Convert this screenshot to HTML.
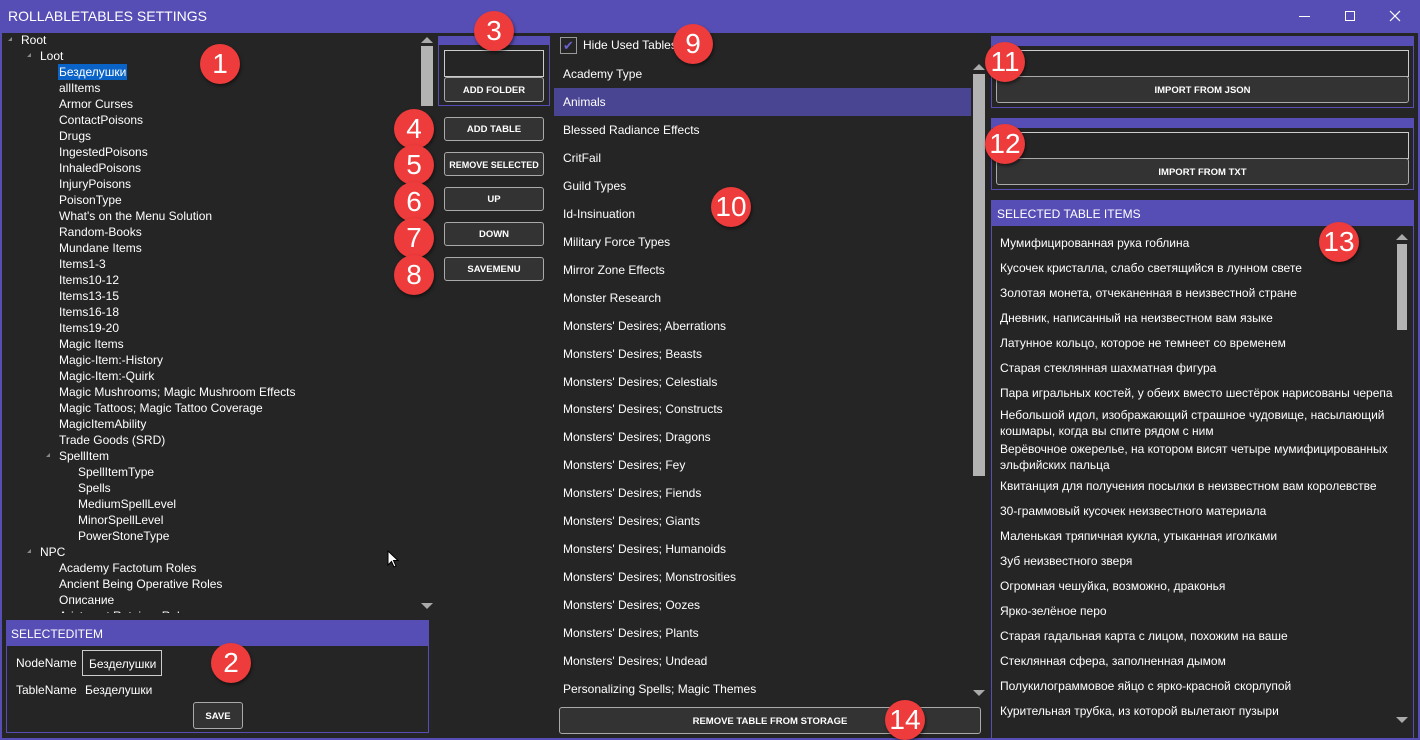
<!DOCTYPE html>
<html><head><meta charset="utf-8"><style>
*{box-sizing:border-box;margin:0;padding:0}
body{width:1420px;height:740px;background:#252525;font-family:"Liberation Sans","Noto Sans CJK SC",sans-serif;color:#fff;font-size:12px;position:relative;overflow:hidden}
.a{position:absolute}
.title{left:0;top:0;width:1420px;height:33px;background:#574eb5;}
.title span{position:absolute;left:8px;top:8px;font-size:14px;color:#fff}
.tree{left:6px;top:33px;width:414px;height:580px;overflow:hidden}
.tree div{position:absolute;height:16px;line-height:16px;white-space:nowrap;font-size:12px}
.tri{position:absolute;width:0;height:0;border-left:4px solid transparent;border-bottom:4px solid #888}
.btn{position:absolute;border:1px solid #aaa;border-radius:3px;background:#333;color:#fff;font-weight:bold;font-size:9.5px;text-align:center;padding-top:2px}
.tb{position:absolute;border:1px solid #ccc;background:#252525}
.grp{position:absolute;border:1px solid #574eb5}
.hdr{position:absolute;background:#574eb5}
.li{position:absolute;left:563px;font-size:12px;height:28px;line-height:28px;white-space:nowrap}
.ri{position:absolute;left:1000px;font-size:12px;line-height:16px;width:400px}
.c{position:absolute;width:40px;height:40px;border-radius:50%;background:#ee3b3b;color:#fff;font-size:28px;text-align:center;line-height:40px;font-family:"Liberation Sans",sans-serif;box-shadow:1px 2px 3px rgba(0,0,0,.5)}
.sb{position:absolute;background:#b3b3b3}
.up{position:absolute;width:0;height:0;border-left:6px solid transparent;border-right:6px solid transparent;border-bottom:6px solid #aaa}
.dn{position:absolute;width:0;height:0;border-left:6px solid transparent;border-right:6px solid transparent;border-top:6px solid #aaa}
</style></head><body>
<div class="a title"><span>ROLLABLETABLES SETTINGS</span>
<div class="a" style="left:1299px;top:16px;width:11px;height:1px;background:#fff"></div>
<div class="a" style="left:1345px;top:11px;width:10px;height:10px;border:1px solid #fff"></div>
<svg class="a" style="left:1389px;top:10px" width="12" height="12"><path d="M1 1L11 11M11 1L1 11" stroke="#fff" stroke-width="1.2"/></svg>
</div>
<div class="a" style="left:0;top:33px;width:2px;height:707px;background:#574eb5"></div>
<div class="a" style="left:1418px;top:33px;width:2px;height:707px;background:#574eb5"></div>
<div class="a" style="left:0;top:738px;width:1420px;height:2px;background:#574eb5"></div>

<div class="a tree">
<span class="tri" style="left:2px;top:4px"></span>
<span class="tri" style="left:21px;top:20px"></span>
<span class="tri" style="left:40px;top:420px"></span>
<div style="left:15px;top:-1px">Root</div>
<div style="left:34px;top:15px">Loot</div>
<div style="left:52px;top:31px;background:#0a64c8;padding:0 1px">Безделушки</div>
<div style="left:53px;top:47px">allItems</div>
<div style="left:53px;top:63px">Armor Curses</div>
<div style="left:53px;top:79px">ContactPoisons</div>
<div style="left:53px;top:95px">Drugs</div>
<div style="left:53px;top:111px">IngestedPoisons</div>
<div style="left:53px;top:127px">InhaledPoisons</div>
<div style="left:53px;top:143px">InjuryPoisons</div>
<div style="left:53px;top:159px">PoisonType</div>
<div style="left:53px;top:175px">What's on the Menu Solution</div>
<div style="left:53px;top:191px">Random-Books</div>
<div style="left:53px;top:207px">Mundane Items</div>
<div style="left:53px;top:223px">Items1-3</div>
<div style="left:53px;top:239px">Items10-12</div>
<div style="left:53px;top:255px">Items13-15</div>
<div style="left:53px;top:271px">Items16-18</div>
<div style="left:53px;top:287px">Items19-20</div>
<div style="left:53px;top:303px">Magic Items</div>
<div style="left:53px;top:319px">Magic-Item:-History</div>
<div style="left:53px;top:335px">Magic-Item:-Quirk</div>
<div style="left:53px;top:351px">Magic Mushrooms; Magic Mushroom Effects</div>
<div style="left:53px;top:367px">Magic Tattoos; Magic Tattoo Coverage</div>
<div style="left:53px;top:383px">MagicItemAbility</div>
<div style="left:53px;top:399px">Trade Goods (SRD)</div>
<div style="left:53px;top:415px">SpellItem</div>
<div style="left:72px;top:431px">SpellItemType</div>
<div style="left:72px;top:447px">Spells</div>
<div style="left:72px;top:463px">MediumSpellLevel</div>
<div style="left:72px;top:479px">MinorSpellLevel</div>
<div style="left:72px;top:495px">PowerStoneType</div>
<div style="left:34px;top:511px">NPC</div>
<span class="tri" style="left:21px;top:516px"></span>
<div style="left:53px;top:527px">Academy Factotum Roles</div>
<div style="left:53px;top:543px">Ancient Being Operative Roles</div>
<div style="left:53px;top:559px">Описание</div>
<div style="left:53px;top:575px">Aristocrat Retainer Roles</div>
</div>
<div class="up" style="left:421px;top:37px"></div>
<div class="sb" style="left:421px;top:46px;width:12px;height:60px"></div>
<div class="dn" style="left:421px;top:603px"></div>
<svg class="a" style="left:387px;top:550px" width="12" height="19"><path d="M1 1L1 15L4.5 11.5L7 17L9 16L6.5 10.5L11 10.5Z" fill="#fff" stroke="#000" stroke-width="1"/></svg>

<div class="grp" style="left:6px;top:620px;width:423px;height:113px"></div>
<div class="hdr" style="left:6px;top:620px;width:423px;height:26px"><span style="position:absolute;left:5px;top:7px;font-size:12px">SELECTEDITEM</span></div>
<div class="a" style="left:16px;top:656px">NodeName</div>
<div class="tb" style="left:82px;top:650px;width:80px;height:26px"><span style="position:absolute;left:6px;top:6px">Безделушки</span></div>
<div class="a" style="left:16px;top:683px">TableName</div>
<div class="a" style="left:85px;top:683px">Безделушки</div>
<div class="btn" style="left:193px;top:702px;width:50px;height:27px;line-height:23px">SAVE</div>

<div class="grp" style="left:438px;top:36px;width:112px;height:70px"></div>
<div class="hdr" style="left:438px;top:36px;width:112px;height:9px"></div>
<div class="tb" style="left:444px;top:50px;width:100px;height:27px"></div>
<div class="btn" style="left:444px;top:77px;width:100px;height:25px;line-height:21px">ADD FOLDER</div>
<div class="btn" style="left:444px;top:117px;width:100px;height:24px;line-height:20px">ADD TABLE</div>
<div class="btn" style="left:444px;top:152px;width:100px;height:24px;line-height:20px;font-size:9px">REMOVE SELECTED</div>
<div class="btn" style="left:444px;top:187px;width:100px;height:24px;line-height:20px">UP</div>
<div class="btn" style="left:444px;top:222px;width:100px;height:24px;line-height:20px">DOWN</div>
<div class="btn" style="left:444px;top:257px;width:100px;height:24px;line-height:20px">SAVEMENU</div>

<div class="a" style="left:560px;top:37px;width:17px;height:17px;border:1px solid #999;color:#6a60d0;font-size:13px;line-height:15px;text-align:center">✔</div>
<div class="a" style="left:583px;top:38px;font-size:12px">Hide Used Tables</div>
<div class="a" style="left:554px;top:88px;width:417px;height:28px;background:#4a4593"></div>
<div class="li" style="top:60px">Academy Type</div>
<div class="li" style="top:88px">Animals</div>
<div class="li" style="top:116px">Blessed Radiance Effects</div>
<div class="li" style="top:144px">CritFail</div>
<div class="li" style="top:172px">Guild Types</div>
<div class="li" style="top:200px">Id-Insinuation</div>
<div class="li" style="top:228px">Military Force Types</div>
<div class="li" style="top:256px">Mirror Zone Effects</div>
<div class="li" style="top:284px">Monster Research</div>
<div class="li" style="top:312px">Monsters' Desires; Aberrations</div>
<div class="li" style="top:340px">Monsters' Desires; Beasts</div>
<div class="li" style="top:368px">Monsters' Desires; Celestials</div>
<div class="li" style="top:395px">Monsters' Desires; Constructs</div>
<div class="li" style="top:423px">Monsters' Desires; Dragons</div>
<div class="li" style="top:451px">Monsters' Desires; Fey</div>
<div class="li" style="top:479px">Monsters' Desires; Fiends</div>
<div class="li" style="top:507px">Monsters' Desires; Giants</div>
<div class="li" style="top:535px">Monsters' Desires; Humanoids</div>
<div class="li" style="top:563px">Monsters' Desires; Monstrosities</div>
<div class="li" style="top:591px">Monsters' Desires; Oozes</div>
<div class="li" style="top:619px">Monsters' Desires; Plants</div>
<div class="li" style="top:647px">Monsters' Desires; Undead</div>
<div class="li" style="top:675px">Personalizing Spells; Magic Themes</div>
<div class="up" style="left:973px;top:64px"></div>
<div class="sb" style="left:973px;top:74px;width:12px;height:402px"></div>
<div class="dn" style="left:973px;top:690px"></div>
<div class="btn" style="left:559px;top:707px;width:422px;height:27px;line-height:23px">REMOVE TABLE FROM STORAGE</div>

<div class="grp" style="left:991px;top:36px;width:423px;height:72px"></div>
<div class="hdr" style="left:991px;top:36px;width:423px;height:10px"></div>
<div class="tb" style="left:996px;top:50px;width:413px;height:27px"></div>
<div class="btn" style="left:996px;top:76px;width:413px;height:27px;line-height:23px">IMPORT FROM JSON</div>
<div class="grp" style="left:991px;top:118px;width:423px;height:72px"></div>
<div class="hdr" style="left:991px;top:118px;width:423px;height:10px"></div>
<div class="tb" style="left:996px;top:132px;width:413px;height:27px"></div>
<div class="btn" style="left:996px;top:158px;width:413px;height:27px;line-height:23px">IMPORT FROM TXT</div>

<div class="grp" style="left:991px;top:200px;width:423px;height:540px"></div>
<div class="hdr" style="left:991px;top:200px;width:423px;height:26px"><span style="position:absolute;left:6px;top:7px;font-size:12px">SELECTED TABLE ITEMS</span></div>
<div class="ri" style="top:235px">Мумифицированная рука гоблина</div>
<div class="ri" style="top:260px">Кусочек кристалла, слабо светящийся в лунном свете</div>
<div class="ri" style="top:285px">Золотая монета, отчеканенная в неизвестной стране</div>
<div class="ri" style="top:310px">Дневник, написанный на неизвестном вам языке</div>
<div class="ri" style="top:335px">Латунное кольцо, которое не темнеет со временем</div>
<div class="ri" style="top:360px">Старая стеклянная шахматная фигура</div>
<div class="ri" style="top:385px">Пара игральных костей, у обеих вместо шестёрок нарисованы черепа</div>
<div class="ri" style="top:407px">Небольшой идол, изображающий страшное чудовище, насылающий кошмары, когда вы спите рядом с ним</div>
<div class="ri" style="top:441px">Верёвочное ожерелье, на котором висят четыре мумифицированных эльфийских пальца</div>
<div class="ri" style="top:478px">Квитанция для получения посылки в неизвестном вам королевстве</div>
<div class="ri" style="top:503px">30-граммовый кусочек неизвестного материала</div>
<div class="ri" style="top:528px">Маленькая тряпичная кукла, утыканная иголками</div>
<div class="ri" style="top:553px">Зуб неизвестного зверя</div>
<div class="ri" style="top:578px">Огромная чешуйка, возможно, драконья</div>
<div class="ri" style="top:603px">Ярко-зелёное перо</div>
<div class="ri" style="top:628px">Старая гадальная карта с лицом, похожим на ваше</div>
<div class="ri" style="top:653px">Стеклянная сфера, заполненная дымом</div>
<div class="ri" style="top:678px">Полукилограммовое яйцо с ярко-красной скорлупой</div>
<div class="ri" style="top:703px">Курительная трубка, из которой вылетают пузыри</div>
<div class="up" style="left:1396px;top:234px"></div>
<div class="sb" style="left:1397px;top:244px;width:10px;height:86px"></div>
<div class="dn" style="left:1396px;top:717px"></div>

<div class="c" style="left:200px;top:44px">1</div>
<div class="c" style="left:211px;top:643px">2</div>
<div class="c" style="left:474px;top:11px">3</div>
<div class="c" style="left:394px;top:109px">4</div>
<div class="c" style="left:394px;top:145px">5</div>
<div class="c" style="left:394px;top:182px">6</div>
<div class="c" style="left:394px;top:218px">7</div>
<div class="c" style="left:394px;top:255px">8</div>
<div class="c" style="left:673px;top:24px">9</div>
<div class="c" style="left:711px;top:187px">10</div>
<div class="c" style="left:985px;top:42px">11</div>
<div class="c" style="left:985px;top:124px">12</div>
<div class="c" style="left:1319px;top:222px">13</div>
<div class="c" style="left:885px;top:700px">14</div>
</body></html>
